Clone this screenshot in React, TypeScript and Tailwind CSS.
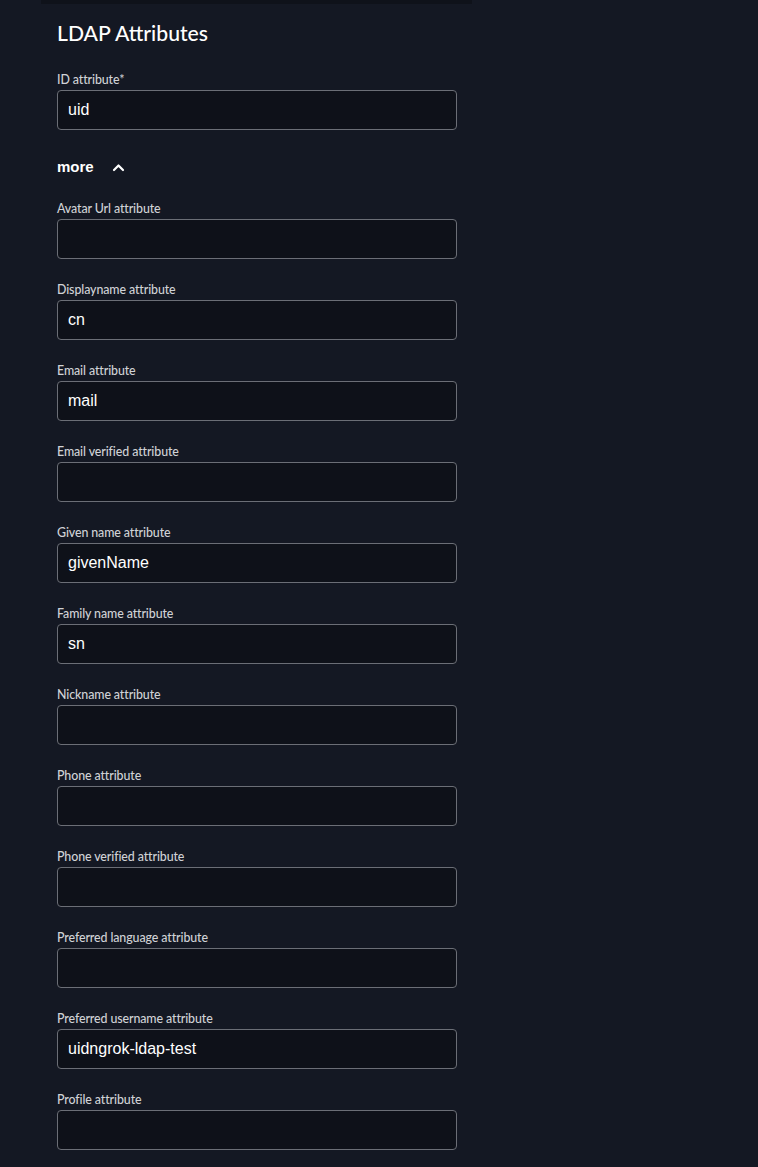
import React from "react";

const fields: { label: string; value: string; required?: boolean }[] = [
  { label: "Avatar Url attribute", value: "" },
  { label: "Displayname attribute", value: "cn" },
  { label: "Email attribute", value: "mail" },
  { label: "Email verified attribute", value: "" },
  { label: "Given name attribute", value: "givenName" },
  { label: "Family name attribute", value: "sn" },
  { label: "Nickname attribute", value: "" },
  { label: "Phone attribute", value: "" },
  { label: "Phone verified attribute", value: "" },
  { label: "Preferred language attribute", value: "" },
  { label: "Preferred username attribute", value: "uidngrok-ldap-test" },
  { label: "Profile attribute", value: "" },
];

function Field({ label, value, required }: { label: string; value: string; required?: boolean }) {
  return (
    <div className="flex flex-col">
      <label className="text-[12.4px] leading-[16px] text-[#d0d2d6] font-medium font-['Lato',sans-serif] tracking-[-0.1px]">
        {label}
        {required && <span>*</span>}
      </label>
      <div className="mt-[2px] h-[40px] w-[400px] rounded-[4px] border border-[#6b6e76] bg-[#0e1119] flex items-center px-[10px]">
        <span className="text-[16px] text-white font-['Liberation_Sans',Arial,sans-serif]">{value}</span>
      </div>
    </div>
  );
}

export default function App() {
  return (
    <div className="min-h-[1167px] w-full bg-[#141823]">
      <div className="ml-[41px] h-[4px] w-[431px] bg-[#0f121a]" />
      <div className="pl-[57px]">
        <h2 className="mt-[16px] text-[21.2px] leading-[26px] text-white font-medium font-['Lato',sans-serif]">LDAP Attributes</h2>
        <div className="mt-[26px]">
          <Field label="ID attribute" value="uid" required />
        </div>
        <div className="mt-[28px] flex items-center h-[18px]">
          <span className="text-[15px] font-semibold text-white font-['Liberation_Sans',Arial,sans-serif]">more</span>
          <svg className="ml-[18px]" width="13" height="9" viewBox="0 0 13 9" fill="none">
            <path d="M2 7 L6.5 2.5 L11 7" stroke="white" strokeWidth="2.2" strokeLinecap="round" strokeLinejoin="round" />
          </svg>
        </div>
        <div className="mt-[25px] flex flex-col gap-[23px]">
          {fields.map((f) => (
            <Field key={f.label} label={f.label} value={f.value} />
          ))}
        </div>
      </div>
    </div>
  );
}
